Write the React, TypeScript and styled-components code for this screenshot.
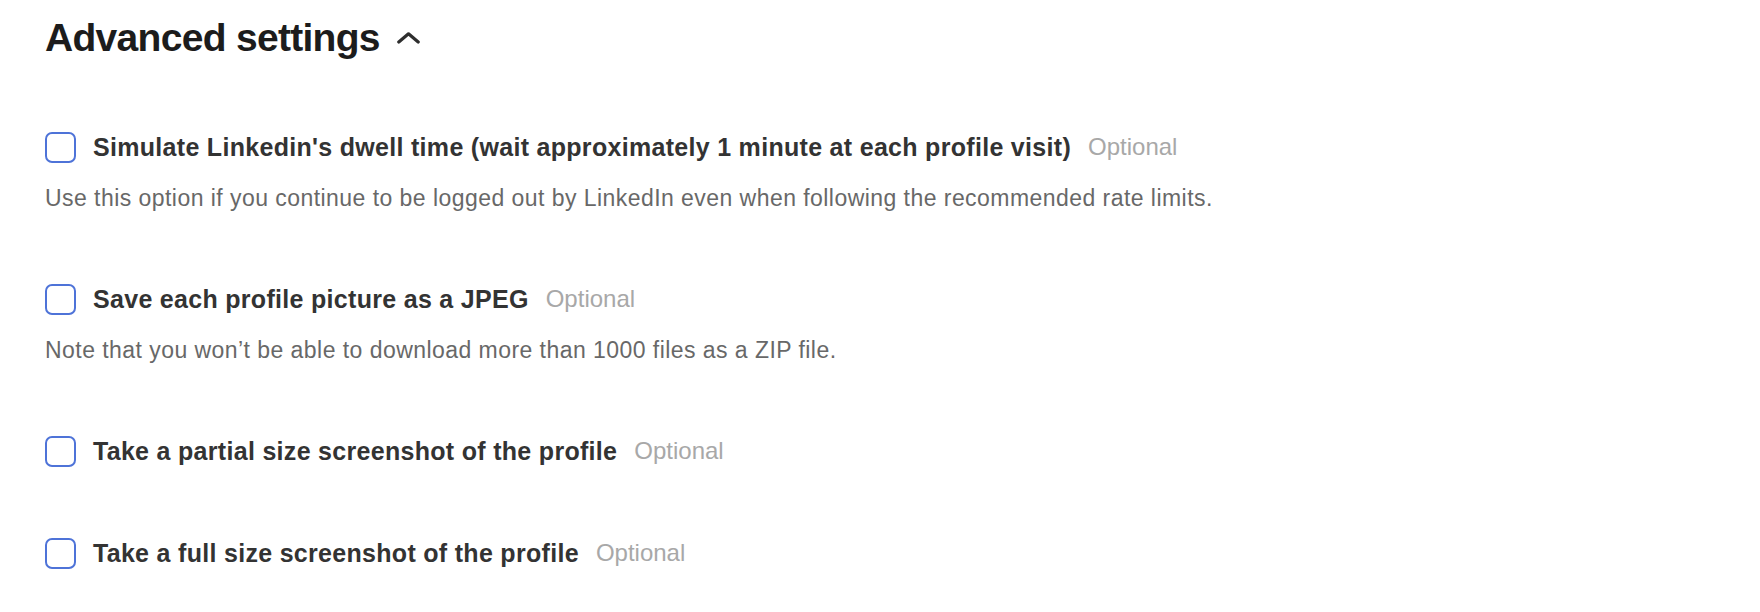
import React, { useState } from 'react';
import styled, { createGlobalStyle } from 'styled-components';

const GlobalStyle = createGlobalStyle`
  html, body {
    margin: 0;
    padding: 0;
    background: #ffffff;
    font-family: "Liberation Sans", Arial, sans-serif;
    -webkit-font-smoothing: antialiased;
  }
`;

const Page = styled.div`
  padding: 14px 45px 40px;
  display: flex;
  flex-direction: column;
  gap: 69px;
`;

const Header = styled.button`
  display: flex;
  align-items: center;
  gap: 17px;
  padding: 0;
  border: none;
  background: none;
  cursor: pointer;
  align-self: flex-start;
`;

const Title = styled.h2`
  margin: 0;
  font-family: "Liberation Sans", Arial, sans-serif;
  font-size: 39px;
  line-height: 48px;
  font-weight: 700;
  letter-spacing: -0.7px;
  color: #1c1c1c;
`;

const Options = styled.div`
  display: flex;
  flex-direction: column;
  gap: 70px;
`;

const Option = styled.div`
  display: flex;
  flex-direction: column;
  gap: 20px;
`;

const LabelRow = styled.label`
  display: flex;
  align-items: center;
  gap: 17px;
  cursor: pointer;
`;

const Box = styled.span<{ $checked: boolean }>`
  width: 31px;
  height: 31px;
  box-sizing: border-box;
  flex-shrink: 0;
  border: 2px solid #4e73d8;
  border-radius: 7px;
  background: ${(p) => (p.$checked ? '#4e73d8' : '#ffffff')};
`;

const LabelText = styled.span`
  font-size: 25px;
  line-height: 32px;
  font-weight: 700;
  letter-spacing: 0.3px;
  color: #333333;
`;

const Optional = styled.span`
  font-size: 24px;
  line-height: 32px;
  font-weight: 400;
  color: #a8a8a8;
`;

const Description = styled.p`
  margin: 0;
  font-size: 23px;
  line-height: 30px;
  letter-spacing: 0.45px;
  color: #686868;
`;

const Chevron = ({ open }: { open: boolean }) => (
  <svg
    width="23"
    height="12"
    viewBox="0 0 23 12"
    style={{ transform: open ? 'none' : 'rotate(180deg)' }}
  >
    <polyline
      points="1.8,10 11.5,1.8 21.2,10"
      fill="none"
      stroke="#2e2e2e"
      strokeWidth="3.2"
      strokeLinecap="round"
      strokeLinejoin="round"
    />
  </svg>
);

const options = [
  {
    label: "Simulate Linkedin's dwell time (wait approximately 1 minute at each profile visit)",
    description:
      'Use this option if you continue to be logged out by LinkedIn even when following the recommended rate limits.',
  },
  {
    label: 'Save each profile picture as a JPEG',
    description: 'Note that you won’t be able to download more than 1000 files as a ZIP file.',
  },
  { label: 'Take a partial size screenshot of the profile' },
  { label: 'Take a full size screenshot of the profile' },
];

const App = () => {
  const [open, setOpen] = useState(true);
  const [checked, setChecked] = useState<boolean[]>(options.map(() => false));

  const toggle = (i: number) =>
    setChecked((prev) => prev.map((v, j) => (j === i ? !v : v)));

  return (
    <>
      <GlobalStyle />
      <Page>
        <Header onClick={() => setOpen(!open)}>
          <Title>Advanced settings</Title>
          <Chevron open={open} />
        </Header>
        {open && (
          <Options>
            {options.map((o, i) => (
              <Option key={o.label}>
                <LabelRow onClick={() => toggle(i)}>
                  <Box $checked={checked[i]} />
                  <LabelText>{o.label}</LabelText>
                  <Optional>Optional</Optional>
                </LabelRow>
                {o.description && <Description>{o.description}</Description>}
              </Option>
            ))}
          </Options>
        )}
      </Page>
    </>
  );
};

export default App;
